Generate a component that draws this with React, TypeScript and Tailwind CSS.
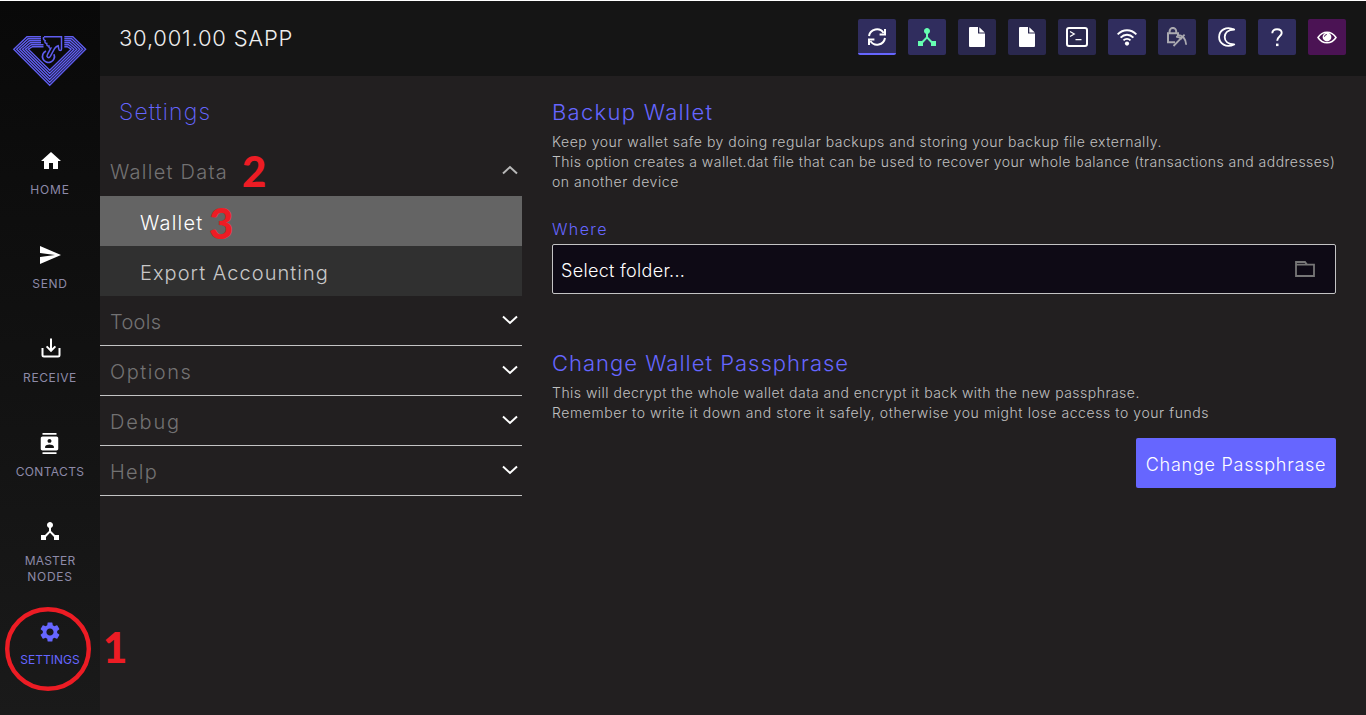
import React from "react";
import { MdHome, MdSend, MdContacts, MdDeviceHub, MdSettings } from "react-icons/md";

const svgBase = { fill: "none", stroke: "currentColor" } as const;

function Logo() {
  const rings = [0, 1, 2, 3, 4, 5];
  return (
    <svg width="76" height="54" viewBox="12 34 76 54" className="shrink-0 text-[#5f5df0]" {...svgBase} strokeWidth="1.4">
      {rings.map((i) => (
        <path
          key={i}
          d={`M${i > 3 ? 43.5 : 41} ${36.7 + i * 2} H${27 + i * 1.1} L${13.8 + i * 2.9} 49.2 L49.7 ${85.3 - i * 3} L${85.6 - i * 2.9} 49.2 L${72.8 - i * 1.1} ${36.7 + i * 2} H64.3`}
        />
      ))}
      <path
        d="M44 36.700 H61.500 V49 Q61.500 50.600 60.200 50.600 Q59 50.600 58.800 49 L58.200 45.800 Q56 46.600 54.800 48.200 L50.300 56.400 Q49.200 58.200 47.700 57.300 Q46.400 56.400 47.300 54.800 L50.800 48.200 Q48.800 48.600 49 46 Q46.400 46.200 46.800 43.400 Q44.200 43.200 45.200 40.600 Q42.800 39.800 43.600 37"
        strokeWidth="1.5"
      />
      <path d="M46 51 A6 6 0 1 0 54 54.200" strokeWidth="1.7" />
    </svg>
  );
}

function ReceiveIcon() {
  return (
    <svg width="20" height="20" viewBox="0 0 20 20" {...svgBase} strokeWidth="2" className="mb-0.5 ml-0.5">
      <path d="M1.500 10v7a1.500 1.500 0 0 0 1.500 1.500h14a1.500 1.500 0 0 0 1.500-1.500V10M10 0.500v12M5.600 8.400l4.400 4.400 4.400-4.400" />
    </svg>
  );
}

function NavItem({ icon, label, className = "" }: { icon: React.ReactNode; label: React.ReactNode; className?: string }) {
  return (
    <div className={`flex w-full flex-col items-center text-white ${className}`}>
      <div className="flex h-6 items-center justify-center">{icon}</div>
      {label}
    </div>
  );
}

const navLabel = "mt-[9px] text-center text-[12px] leading-4 text-[#8d8aa8]";

function TopButton({ children, className = "bg-[#302d5e]" }: { children: React.ReactNode; className?: string }) {
  return <button className={`flex h-9 w-[38px] items-center justify-center rounded-[2px] text-white ${className}`}>{children}</button>;
}

function SyncIcon() {
  return (
    <svg width="20" height="20" viewBox="0 0 20 20" {...svgBase} strokeWidth="2" className="mt-0.5">
      <path d="M2 9A8 8 0 0 1 16.6 6M18 11A8 8 0 0 1 3.4 14" />
      <path d="M18 2v5.4h-5.4M2 18v-5.4h5.4" />
    </svg>
  );
}

function FileIcon() {
  return (
    <svg width="16" height="20" viewBox="0 0 16 20" fill="currentColor">
      <path d="M1 0H9V6.5H16V19a1 1 0 0 1-1 1H1a1 1 0 0 1-1-1V1a1 1 0 0 1 1-1ZM10.3 0.2 15.8 5.4H10.3Z" />
    </svg>
  );
}

function ConsoleIcon() {
  return (
    <svg width="22" height="20" viewBox="0 0 22 20" {...svgBase}>
      <rect x="1" y="1" width="20" height="18" rx="2" strokeWidth="2" />
      <path d="M4 4.5 8.2 7 4 9.5M9.5 12.7h6" strokeWidth="1.3" />
    </svg>
  );
}

function WifiIcon() {
  return (
    <svg width="20" height="17" viewBox="0 0 20 17" {...svgBase} strokeWidth="1.9">
      <path d="M0.6 5.4C6-.2 14-.2 19.4 5.4M3.6 8.6c3.7-3.8 9.1-3.8 12.8 0M6.5 11.4c2-2.1 5-2.1 7 0" />
      <circle cx="10" cy="14.6" r="2.1" fill="currentColor" stroke="none" />
    </svg>
  );
}

function LockIcon() {
  return (
    <svg width="22" height="20" viewBox="0 0 22 20" {...svgBase} strokeWidth="1.8" className="text-[#aaa9b0]">
      <path d="M9 15.300H2V6.300H12V9M3.600 6V4.200a3.300 3.300 0 0 1 6.600 0v2" strokeWidth="2" />
      <path d="M11 7.800c5.500 .2 8.800 3.700 9.200 10M10 9.600c2.600 .2 4.500 1.200 5.900 2.600M18.600 7.700 7.500 19" />
    </svg>
  );
}

function MoonIcon() {
  return (
    <svg width="18" height="20" viewBox="0 0 18 20" {...svgBase} strokeWidth="1.8" strokeLinejoin="round">
      <path d="M16.2 2.500C8 -1.500 1.100 3.700 1.100 10S8 21.500 16.200 17.500C9.500 17.300 6.700 13.800 6.700 10S9.500 2.700 16.200 2.500Z" />
    </svg>
  );
}

function QuestionIcon() {
  return (
    <svg width="12" height="19" viewBox="0 0 12 19" {...svgBase} strokeWidth="1.900" className="mt-px">
      <path d="M1.300 5.200C1.300 2.600 3.300 1.200 6 1.200S10.700 2.700 10.700 5C10.700 8.200 6.200 8.300 6.200 12.800" />
      <rect x="5" y="15.600" width="2.500" height="2.500" fill="currentColor" stroke="none" />
    </svg>
  );
}

function EyeIcon() {
  return (
    <svg width="20" height="13" viewBox="0 0 20 13" {...svgBase} strokeWidth="1.5">
      <path d="M1 6.500C5.500-.6 14.500-.6 19 6.500 14.500 13.600 5.500 13.600 1 6.500Z" />
      <circle cx="10" cy="6" r="4.400" fill="currentColor" stroke="none" />
      <path d="M7.500 5.700A2.400 2.400 0 0 1 9.800 3.500" stroke="#4b1354" strokeWidth="1" />
    </svg>
  );
}

function Chevron({ up = false }: { up?: boolean }) {
  return (
    <svg width="16" height="10" viewBox="0 0 16 10" {...svgBase} strokeWidth="2" className={up ? "mb-0.5 text-[#b8b8b8]" : "mb-0.5 text-white"}>
      <path d={up ? "M1 8.500 8 2l7 6.500" : "M1 1.500 8 8l7-6.500"} />
    </svg>
  );
}

function MenuRow({ label, tracking }: { label: string; tracking: string }) {
  return (
    <div className="flex h-[50px] items-center justify-between border-b border-[#c4c4c4] pr-1 pl-[10px]">
      <span className={`pt-[3px] text-[20px] leading-6 font-light text-[#737273] ${tracking}`}>{label}</span>
      <Chevron />
    </div>
  );
}

export default function App() {
  return (
    <div className="relative flex h-[715px] w-[1366px] overflow-hidden border-t border-white bg-[#221f20] font-['Inter',sans-serif]">
      <nav className="flex w-[100px] shrink-0 flex-col items-center bg-linear-to-b from-[#090909] to-[#1a1a1a] pt-[33px]">
        <Logo />
        <NavItem className="mt-[61px]" icon={<MdHome size={24} className="ml-0.5" />} label={<span className={`${navLabel} tracking-[0.8px]`}>HOME</span>} />
        <NavItem className="mt-[45px]" icon={<MdSend size={24} />} label={<span className={`${navLabel} tracking-[0.7px]`}>SEND</span>} />
        <NavItem className="mt-[45px]" icon={<ReceiveIcon />} label={<span className={`${navLabel} tracking-[0.6px]`}>RECEIVE</span>} />
        <NavItem className="mt-[45px]" icon={<MdContacts size={21} className="mr-0.5" />} label={<span className={`${navLabel} tracking-[0.35px]`}>CONTACTS</span>} />
        <NavItem
          className="mt-[39px]"
          icon={<MdDeviceHub size={24} />}
          label={
            <span className="mt-[10px] text-center text-[12px] leading-4 text-[#8d8aa8]">
              <span className="tracking-[0.2px]">MASTER</span>
              <br />
              <span className="tracking-[0.7px]">NODES</span>
            </span>
          }
        />
        <NavItem className="mt-[35px]" icon={<MdSettings size={24} className="text-[#6666ff]" />} label={<span className="mt-2 text-[12px] leading-4 text-[#6666ff]">SETTINGS</span>} />
      </nav>

      <div className="flex min-w-0 flex-1 flex-col">
        <header className="flex h-[75px] shrink-0 items-center justify-between bg-[#151515] pr-5 pl-[19px]">
          <span className="pb-0.5 text-[22px] leading-7 font-light tracking-[0.78px] text-[#eeeeee]">30,001.00 SAPP</span>
          <div className="flex gap-3 pb-[3px]">
            <TopButton className="border-b-2 border-[#6666ff] bg-[#302d5e]"><SyncIcon /></TopButton>
            <TopButton><MdDeviceHub size={24} className="text-[#66ffb2]" /></TopButton>
            <TopButton className="bg-[#2a284e]"><FileIcon /></TopButton>
            <TopButton className="bg-[#2a284e]"><FileIcon /></TopButton>
            <TopButton className="bg-[#2a284e]"><ConsoleIcon /></TopButton>
            <TopButton><WifiIcon /></TopButton>
            <TopButton className="bg-[#2d2b56]"><LockIcon /></TopButton>
            <TopButton><MoonIcon /></TopButton>
            <TopButton><QuestionIcon /></TopButton>
            <TopButton className="bg-[#4b1354]"><EyeIcon /></TopButton>
          </div>
        </header>

        <div className="flex flex-1">
          <aside className="w-[422px] shrink-0">
            <div className="flex h-[70px] items-center pt-0.5 pl-[19px]">
              <h1 className="text-[23px] leading-7 font-extralight tracking-[1.1px] text-[#6666ff]">Settings</h1>
            </div>
            <div className="flex h-[50px] items-center justify-between pr-1 pl-[10px]">
              <span className="pt-0.5 text-[20px] leading-6 font-light tracking-[1.25px] text-[#737273]">Wallet Data</span>
              <Chevron up />
            </div>
            <div className="flex h-[50px] items-center bg-[#646464] pt-1 pl-10 text-[20px] font-light tracking-[1.2px] text-white"><span>Wallet</span></div>
            <div className="flex h-[50px] items-center bg-[#303030] pt-1 pl-10 text-[20px] font-light tracking-[1.05px] text-[#c8c8c8]"><span>Export Accounting</span></div>
            <MenuRow label="Tools" tracking="tracking-[0.3px]" />
            <MenuRow label="Options" tracking="tracking-[1.5px]" />
            <MenuRow label="Debug" tracking="tracking-[1.8px]" />
            <MenuRow label="Help" tracking="tracking-[1.2px]" />
          </aside>

          <main className="flex flex-1 flex-col items-start pt-[22px] pr-[30px] pl-[30px]">
            <h2 className="text-[22px] leading-7 font-light tracking-[1.3px] text-[#6666ff]">Backup Wallet</h2>
            <div className="mt-1.5 text-[14px] leading-5 font-light whitespace-nowrap text-[#c0c0c0]">
              <p className="tracking-[0.52px]">Keep your wallet safe by doing regular backups and storing your backup file externally.</p>
              <p className="tracking-[0.46px]">This option creates a wallet.dat file that can be used to recover your whole balance (transactions and addresses)</p>
              <p className="tracking-[0.55px]">on another device</p>
            </div>
            <label className="mt-[27px] text-[16px] leading-5 font-light tracking-[1.4px] text-[#6666ff]">Where</label>
            <div className="mt-[5px] flex h-[50px] w-full items-center justify-between rounded-[2px] border border-[#c4c4c4] bg-[#0e0a15] pr-5 pl-2">
              <span className="pt-1 text-[18px] leading-6 font-light tracking-[0.3px] text-white">Select folder...</span>
              <svg width="20" height="16" viewBox="0 0 20 16" className="text-[#777777]" {...svgBase} strokeWidth="1.800">
                <path d="M1 15V1h9l2 2.600h7V15ZM1 3.600h11" />
              </svg>
            </div>
            <h2 className="mt-[55px] text-[22px] leading-7 font-light tracking-[1px] text-[#6666ff]">Change Wallet Passphrase</h2>
            <div className="mt-1.5 text-[14px] leading-5 font-light whitespace-nowrap text-[#c0c0c0]">
              <p className="tracking-[0.48px]">This will decrypt the whole wallet data and encrypt it back with the new passphrase.</p>
              <p className="tracking-[0.58px]">Remember to write it down and store it safely, otherwise you might lose access to your funds</p>
            </div>
            <button className="mt-[15px] flex h-[50px] w-[200px] items-center justify-center self-end rounded-[2px] bg-[#6666ff] pt-0.5 text-[18px] font-light tracking-[0.75px] whitespace-nowrap text-white">
              <span>Change Passphrase</span>
            </button>
          </main>
        </div>
      </div>

      <svg width="86" height="84" viewBox="0 0 86 84" className="absolute top-[606px] left-[5px]">
        <ellipse cx="43" cy="42" rx="40.800" ry="39.800" fill="none" stroke="#ed1c24" strokeWidth="4.400" />
      </svg>
      <span className="absolute top-[621px] left-[103px] font-['Lato'] text-[42px] leading-[50px] font-black text-[#ed1c24]">1</span>
      <span className="absolute top-[145px] left-[242px] font-['Lato'] text-[42px] leading-[50px] font-black text-[#ed1c24]">2</span>
      <span className="absolute top-[197px] left-[209px] font-['Lato'] text-[42px] leading-[50px] font-black text-[#ed1c24]">3</span>
    </div>
  );
}
